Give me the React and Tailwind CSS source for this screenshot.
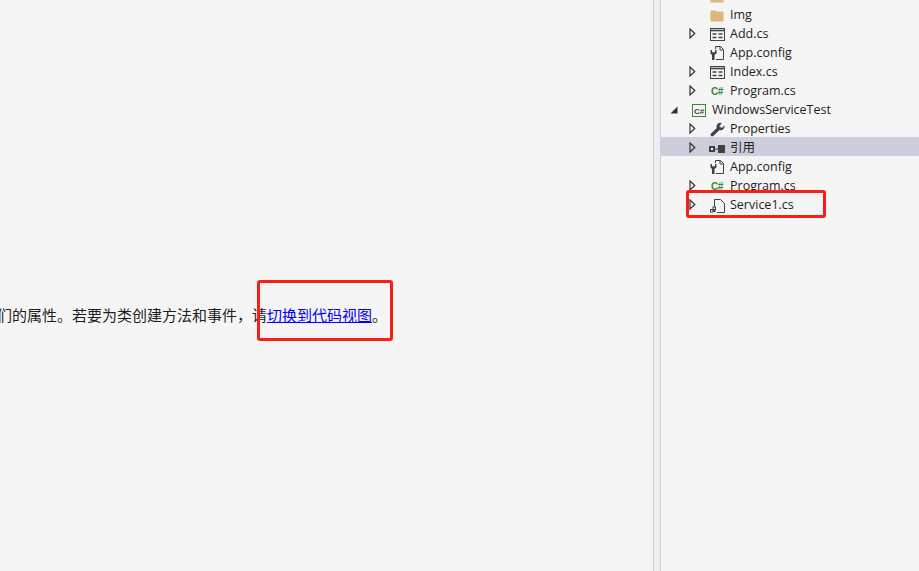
import React from 'react';

const Arrow = ({ open }) =>
  open ? (
    <svg width="8" height="8" viewBox="0 0 8 8" className="block">
      <path d="M7.5 0.5V7.5H0.5Z" fill="#333333" />
    </svg>
  ) : (
    <svg width="7" height="11" viewBox="0 0 7 11" className="block">
      <path d="M1 1L5.8 5.5L1 10Z" fill="none" stroke="#333333" strokeWidth="1.2" />
    </svg>
  );

const FolderIcon = () => (
  <svg width="14" height="12" viewBox="0 0 14 12">
    <path d="M0.5 0.5H5.5L6.5 1.5H13.5V11.5H0.5Z" fill="#dcb67a" />
  </svg>
);

const FormIcon = () => (
  <svg width="15" height="13" viewBox="0 0 15 13">
    <rect x="0.5" y="0.5" width="14" height="12" fill="#f5f5f5" stroke="#424242" />
    <path d="M0.5 2.5H14.5" stroke="#424242" strokeWidth="1.6" />
    <path d="M2.5 6H6.5M8.5 6H12.5M2.5 9.5H6.5M8.5 9.5H12.5" stroke="#424242" strokeWidth="1.3" />
  </svg>
);

const ConfigIcon = () => (
  <svg width="15" height="15" viewBox="0 0 15 15">
    <path d="M5.5 3V0.5H10.5L13.5 3.5V13.5H6" fill="none" stroke="#424242" />
    <path d="M10 0.5V4H13.5" fill="none" stroke="#424242" />
    <path d="M0.5 4V7.5L2 9V14H4.5V9L6.5 7.5V4H5V6.2H2V4Z" fill="#424242" />
  </svg>
);

const CsIcon = () => (
  <span className="font-['Liberation_Sans',sans-serif] text-[10px] leading-none font-bold tracking-[-0.3px] text-[#388a34]">
    C#
  </span>
);

const ProjectIcon = () => (
  <svg width="14" height="13" viewBox="0 0 14 13">
    <rect x="0.5" y="0.5" width="13" height="12" fill="#f5f5f5" stroke="#388a34" />
    <text x="2" y="9.5" fontSize="8" fontWeight="700" fill="#424242" fontFamily="Liberation Sans">C#</text>
  </svg>
);

const WrenchIcon = () => (
  <svg width="15" height="15" viewBox="0 0 15 15">
    <path d="M14.5 3.5L11.8 6L9.3 4.2L11.8 1C9 0.2 6.5 2 6.5 4.5C6.5 5 6.6 5.5 6.8 6L0.8 11.8C0.2 12.8 0.8 14.2 2 14.5C2.5 14.5 3 14.2 3.3 14L9.2 8.2C12 9 15 6.5 14.5 3.5Z" fill="#424242" />
  </svg>
);

const RefIcon = () => (
  <svg width="16" height="8" viewBox="0 0 16 8">
    <rect x="0" y="1" width="6" height="6" fill="#424242" />
    <rect x="2" y="3" width="2" height="2" fill="#f5f5f5" />
    <path d="M6 4H9" stroke="#424242" />
    <rect x="9" y="0" width="7" height="8" fill="#424242" />
  </svg>
);

const ServiceIcon = () => (
  <svg width="15" height="14" viewBox="0 0 15 14">
    <path d="M4.5 8V0.5H10.5L14.5 4.5V13.5H7" fill="none" stroke="#424242" />
    <rect x="0.5" y="10.5" width="2.5" height="2.5" fill="none" stroke="#424242" />
    <rect x="3" y="8" width="2.5" height="2.5" fill="none" stroke="#424242" />
    <rect x="3" y="10.5" width="2.5" height="2.5" fill="#424242" />
  </svg>
);

const rows = [
  { label: 'Bin', icon: <FolderIcon />, depth: 2 },
  { label: 'Img', icon: <FolderIcon />, depth: 2 },
  { label: 'Add.cs', icon: <FormIcon />, depth: 2, arrow: true },
  { label: 'App.config', icon: <ConfigIcon />, depth: 2 },
  { label: 'Index.cs', icon: <FormIcon />, depth: 2, arrow: true },
  { label: 'Program.cs', icon: <CsIcon />, depth: 2, arrow: true },
  { label: 'WindowsServiceTest', icon: <ProjectIcon />, depth: 1, open: true },
  { label: 'Properties', icon: <WrenchIcon />, depth: 2, arrow: true },
  { label: '引用', icon: <RefIcon />, depth: 2, arrow: true, selected: true },
  { label: 'App.config', icon: <ConfigIcon />, depth: 2 },
  { label: 'Program.cs', icon: <CsIcon />, depth: 2, arrow: true },
  { label: 'Service1.cs', icon: <ServiceIcon />, depth: 2, arrow: true, marked: true },
];

const TreeRow = ({ row }) => (
  <div className={`relative flex h-[19px] shrink-0 items-center pt-[4px] ${row.depth === 1 ? 'pl-[5px]' : 'pl-[23px]'} ${row.selected ? 'bg-[#cccedb]' : ''}`}>
    <div className="mt-[-2px] flex w-[16px] shrink-0 items-center justify-center">
      {row.open && <Arrow open />}
      {row.arrow && <Arrow />}
    </div>
    <div className="ml-[8px] flex w-[18px] shrink-0 items-center justify-center">{row.icon}</div>
    <span className={`ml-[4px] whitespace-nowrap text-[12.5px] text-[#1e1e1e] ${row.selected ? 'mt-[-1px]' : ''}`}>{row.label}</span>
    {row.marked && (
      <div className="absolute left-[25px] top-[-4px] h-[28px] w-[140px] rounded-[3px] border-[3px] border-[#fa1e14]" />
    )}
  </div>
);

export default function App() {
  return (
    <div className="flex h-[571px] w-[919px] overflow-hidden bg-[#f5f5f5] font-['Open_Sans','Noto_Sans_CJK_SC',sans-serif]">
      {/* Designer surface */}
      <div className="flex w-[653px] shrink-0 items-start overflow-hidden pt-[280px] pl-[257px]">
        <div className="relative h-[61px] w-[136px] shrink-0">
          <p className="absolute right-[6px] top-[24px] whitespace-nowrap font-['Noto_Sans_CJK_SC',sans-serif] text-[15px] leading-[22px] text-[#1e1e1e]">
            们的属性。若要为类创建方法和事件，请<a href="#" className="text-[#0000ff] underline">切换到代码视图</a>。
          </p>
          <div className="absolute inset-0 rounded-[3px] border-[3px] border-[#fa1e14]" />
        </div>
      </div>

      {/* Splitter */}
      <div className="w-[8px] shrink-0 border-x border-[#cccedb] bg-[#eeeef2]" />

      {/* Solution explorer */}
      <div className="flex min-w-0 flex-1 flex-col overflow-hidden">
        <div className="mt-[-15px] flex flex-col">
          {rows.map((row, i) => (
            <TreeRow key={i} row={row} />
          ))}
        </div>
      </div>
    </div>
  );
}
